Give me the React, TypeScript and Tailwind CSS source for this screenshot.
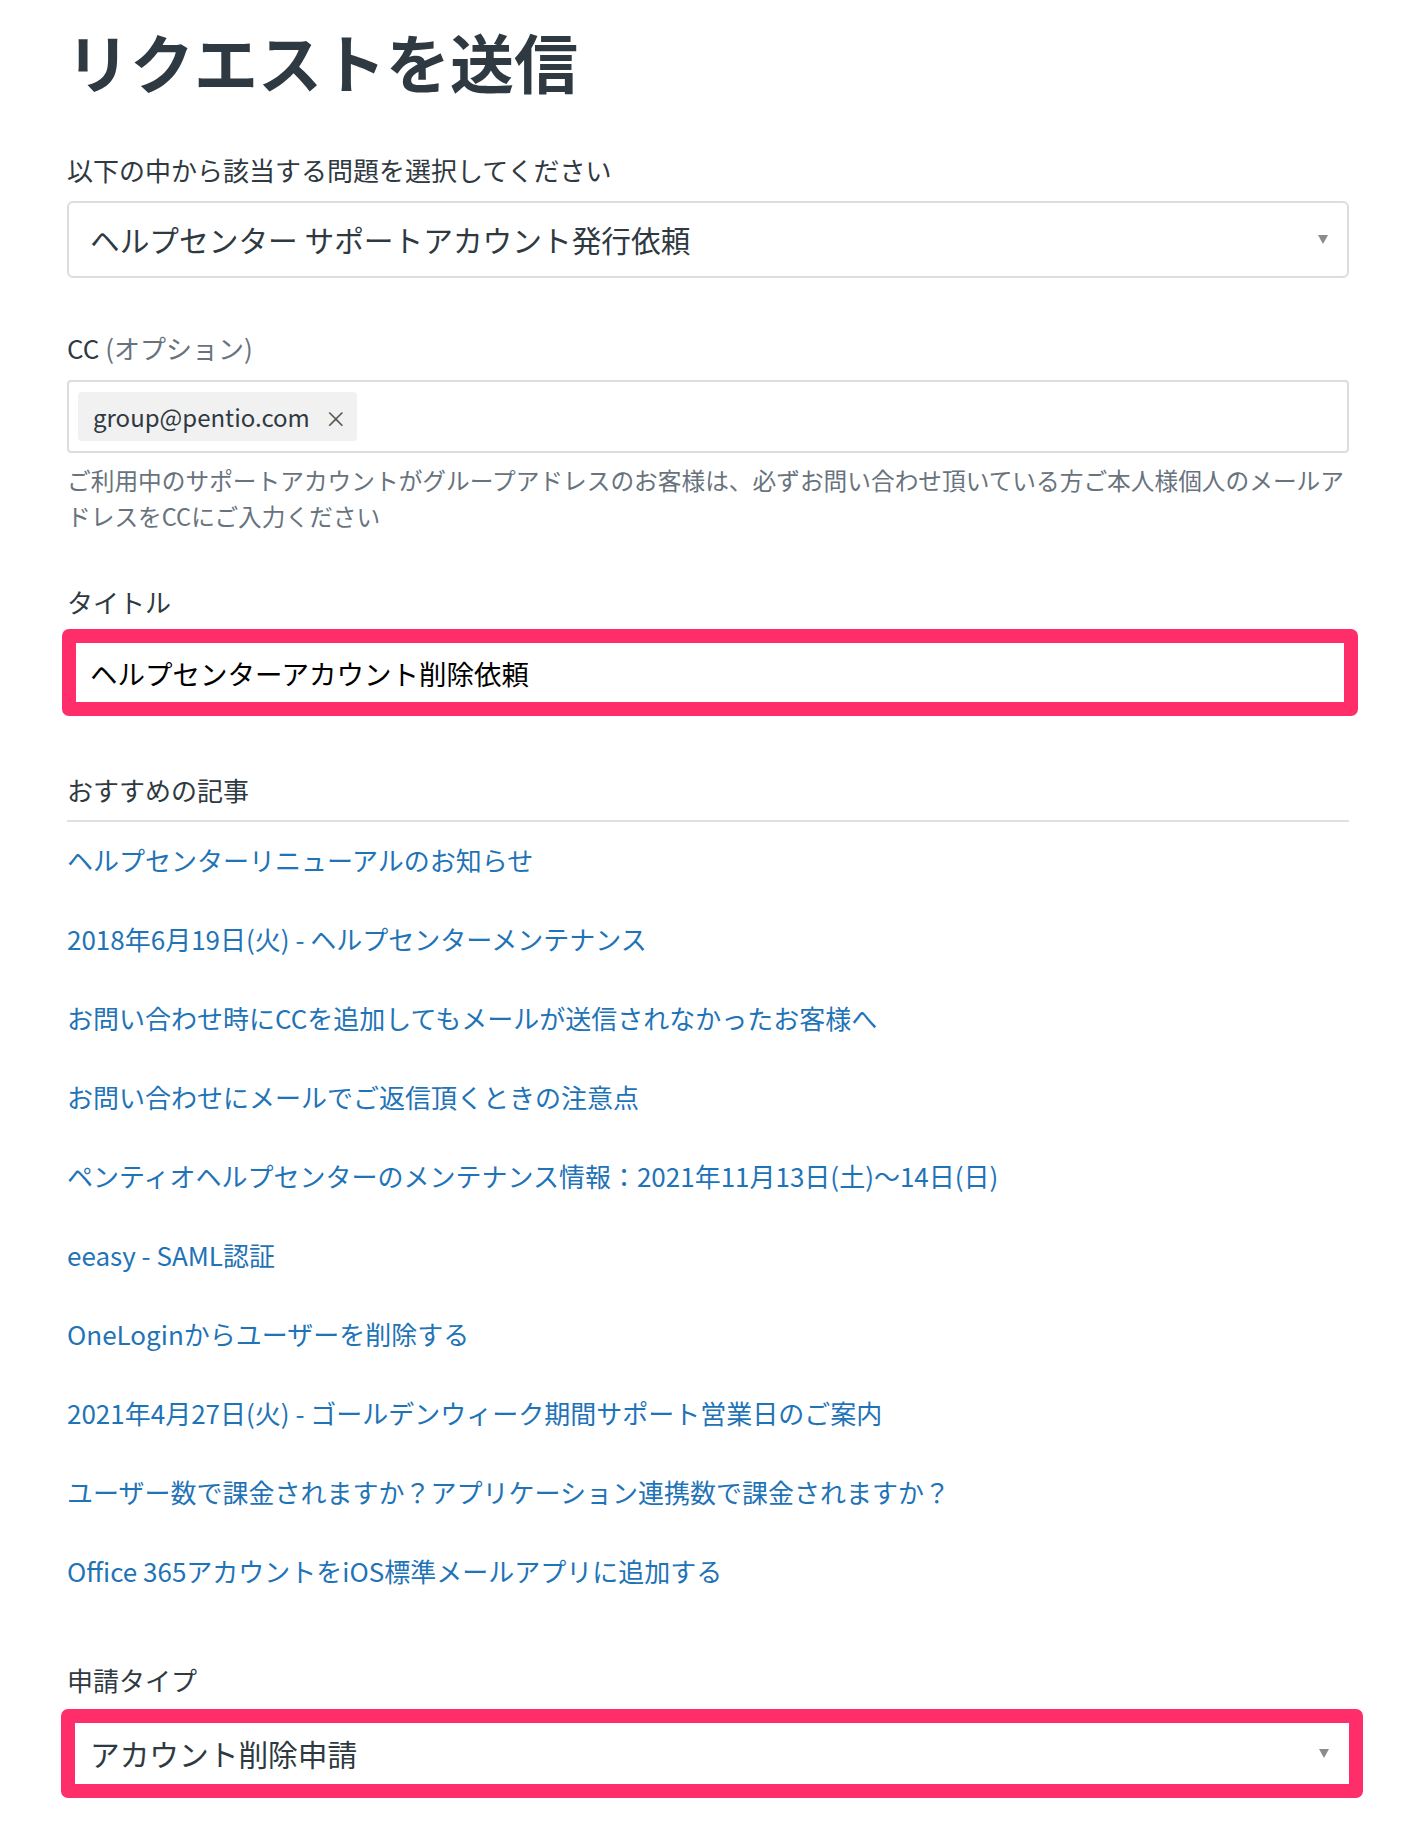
const links = [
  "ヘルプセンターリニューアルのお知らせ",
  "2018年6月19日(火) - ヘルプセンターメンテナンス",
  "お問い合わせ時にCCを追加してもメールが送信されなかったお客様へ",
  "お問い合わせにメールでご返信頂くときの注意点",
  "ペンティオヘルプセンターのメンテナンス情報：2021年11月13日(土)〜14日(日)",
  "eeasy - SAML認証",
  "OneLoginからユーザーを削除する",
  "2021年4月27日(火) - ゴールデンウィーク期間サポート営業日のご案内",
  "ユーザー数で課金されますか？アプリケーション連携数で課金されますか？",
  "Office 365アカウントをiOS標準メールアプリに追加する",
];

const Arrow = () => (
  <svg width="10" height="9" viewBox="0 0 10 9" className="shrink-0">
    <path d="M0 0 L10 0 L5 9 Z" fill="#8c8c8c" />
  </svg>
);

export default function App() {
  return (
    <div className="min-h-[1828px] bg-white px-[67px] pt-[20px] pb-[30px] font-['Noto_Sans_CJK_JP',sans-serif] text-[#2f3941]">
      <h1 className="text-[64px] leading-[80px] font-bold -ml-[1px]">リクエストを送信</h1>

      <div className="mt-[52px]">
        <label className="block text-[26px] leading-[36px]">以下の中から該当する問題を選択してください</label>
        <div className="mt-[13px] h-[77px] border-2 border-[#dddddd] rounded-[6px] flex items-center justify-between pl-[21px] pr-[19px]">
          <span className="text-[29.7px] leading-[36px]">ヘルプセンター サポートアカウント発行依頼</span>
          <Arrow />
        </div>
      </div>

      <div className="mt-[52px]">
        <label className="block text-[26px] leading-[36px]">
          CC <span className="text-[#68737d]">(オプション)</span>
        </label>
        <div className="mt-[14px] h-[73px] border-2 border-[#dddddd] rounded-[4px] flex items-center pl-[9px]">
          <div className="h-[49px] bg-[#f1f1f1] rounded-[4px] flex items-center pl-[15px] pr-[10px] gap-[15px]">
            <span className="text-[24px] leading-none">group@pentio.com</span>
            <span className="text-[22px] leading-none text-[#555]">×</span>
          </div>
        </div>
        <p className="mt-[9px] text-[23.7px] leading-[36px] text-[#68737d]">
          ご利用中のサポートアカウントがグループアドレスのお客様は、必ずお問い合わせ頂いている方ご本人様個人のメールアドレスをCCにご入力ください
        </p>
      </div>

      <div className="mt-[50px]">
        <label className="block text-[26px] leading-[36px]">タイトル</label>
        <div className="mt-[9px] -ml-[5px] -mr-[9px] h-[87px] border-[14px] border-[#ff2e6b] rounded-[7px] flex items-center pl-[14px]">
          <span className="text-[27.5px] leading-[36px] text-black">ヘルプセンターアカウント削除依頼</span>
        </div>
      </div>

      <div className="mt-[56px]">
        <div className="text-[26px] leading-[36px] pb-[12px] border-b-2 border-[#e0e0e0]">おすすめの記事</div>
        <ul className="mt-[20px] flex flex-col gap-[43px]">
          {links.map((t) => (
            <li key={t}>
              <a href="#" className="text-[26px] leading-[36px] text-[#1f73b7]">{t}</a>
            </li>
          ))}
        </ul>
      </div>

      <div className="mt-[73px]">
        <label className="block text-[26px] leading-[36px]">申請タイプ</label>
        <div className="mt-[11px] -ml-[6px] -mr-[14px] h-[89px] border-[14px] border-[#ff2e6b] rounded-[7px] flex items-center justify-between pl-[15px] pr-[20px]">
          <span className="text-[29.7px] leading-[36px]">アカウント削除申請</span>
          <Arrow />
        </div>
      </div>
    </div>
  );
}
